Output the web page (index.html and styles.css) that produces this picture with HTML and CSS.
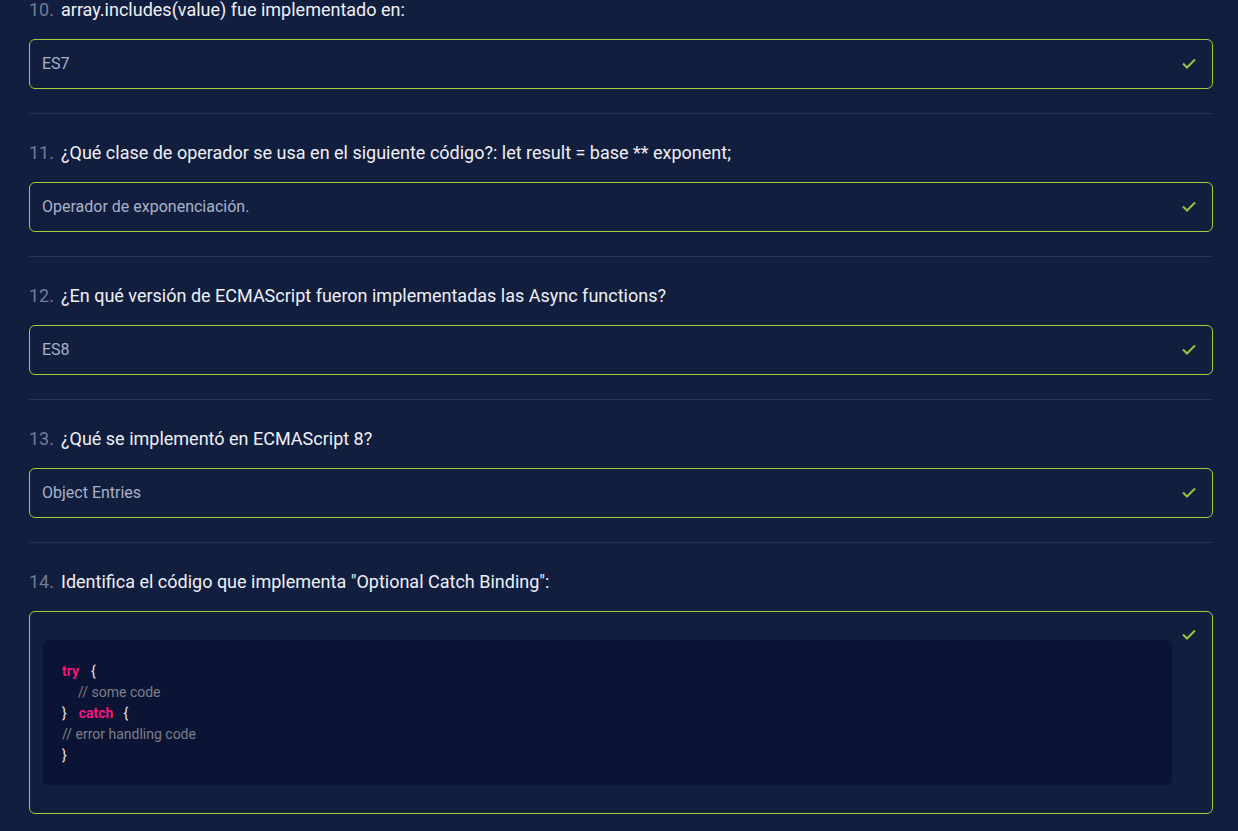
FILE: index.html
```html
<!DOCTYPE html>
<html lang="es">
<head>
<meta charset="utf-8">
<title>Quiz</title>
<link rel="stylesheet" href="styles.css">
</head>
<body>
<main class="quiz">
  <section class="question">
    <h3 class="q-title"><span class="q-num">10.</span>array.includes(value) fue implementado en:</h3>
    <div class="answer">
      <span class="answer-text">ES7</span>
      <svg class="check" width="14" height="11" viewBox="0 0 14 11"><path d="M1 5.5 L5 9.5 L13 1.5" fill="none" stroke="#93c83e" stroke-width="2"/></svg>
    </div>
  </section>
  <section class="question">
    <h3 class="q-title"><span class="q-num">11.</span>¿Qué clase de operador se usa en el siguiente código?: let result = base ** exponent;</h3>
    <div class="answer">
      <span class="answer-text">Operador de exponenciación.</span>
      <svg class="check" width="14" height="11" viewBox="0 0 14 11"><path d="M1 5.5 L5 9.5 L13 1.5" fill="none" stroke="#93c83e" stroke-width="2"/></svg>
    </div>
  </section>
  <section class="question">
    <h3 class="q-title"><span class="q-num">12.</span>¿En qué versión de ECMAScript fueron implementadas las Async functions?</h3>
    <div class="answer">
      <span class="answer-text">ES8</span>
      <svg class="check" width="14" height="11" viewBox="0 0 14 11"><path d="M1 5.5 L5 9.5 L13 1.5" fill="none" stroke="#93c83e" stroke-width="2"/></svg>
    </div>
  </section>
  <section class="question">
    <h3 class="q-title"><span class="q-num">13.</span>¿Qué se implementó en ECMAScript 8?</h3>
    <div class="answer">
      <span class="answer-text">Object Entries</span>
      <svg class="check" width="14" height="11" viewBox="0 0 14 11"><path d="M1 5.5 L5 9.5 L13 1.5" fill="none" stroke="#93c83e" stroke-width="2"/></svg>
    </div>
  </section>
  <section class="question last">
    <h3 class="q-title"><span class="q-num">14.</span>Identifica el código que implementa "Optional Catch Binding":</h3>
    <div class="answer answer-code">
      <pre class="code"><span class="kw kw-first">try</span><span class="p">{</span>
<span class="indent">// some code</span>
<span class="p">}</span><span class="kw kw-mid">catch</span><span class="p">{</span>
<span class="cm">// error handling code</span>
<span class="p">}</span></pre>
      <svg class="check" width="14" height="11" viewBox="0 0 14 11"><path d="M1 5.5 L5 9.5 L13 1.5" fill="none" stroke="#93c83e" stroke-width="2"/></svg>
    </div>
  </section>
</main>
</body>
</html>
```
FILE: styles.css
```css
html, body {
  margin: 0;
  padding: 0;
  background: #121e3e;
}
body {
  font-family: Roboto, "Liberation Sans", Arial, sans-serif;
  color: #eef0f5;
}
.quiz {
  width: 1184px;
  margin: -2px 0 0 29px;
}
.question {
  padding-bottom: 24px;
  border-bottom: 1px solid #263358;
  margin-bottom: 27px;
}
.question.last {
  border-bottom: none;
  margin-bottom: 0;
}
.q-title {
  margin: 0 0 17px 0;
  font-size: 18px;
  line-height: 24px;
  font-weight: 400;
  color: #eef0f5;
}
.q-num {
  color: #6f7d9b;
  font-size: 18px;
  margin-right: 7px;
}
.answer {
  box-sizing: border-box;
  height: 50px;
  border: 1px solid #a2cf3c;
  border-radius: 6px;
  display: flex;
  align-items: center;
  justify-content: space-between;
  padding: 0 16px 2px 12px;
}
.answer-text {
  font-size: 16px;
  color: #a8b2c8;
}
.check {
  flex: none;
}
.answer-code {
  height: auto;
  align-items: flex-start;
  padding: 17px 16px 17px 13px;
}
.code {
  flex: 1;
  margin: 11px 10px 11px 0;
  padding: 21px 19px 19px 19px;
  background: #0b1434;
  border-radius: 6px;
  font-family: Roboto, "Liberation Sans", Arial, sans-serif;
  font-size: 14px;
  line-height: 21px;
  color: #7d7f88;
  white-space: pre;
}
.kw {
  color: #f4157a;
  font-weight: 700;
}
.kw-first {
  margin-right: 12px;
}
.kw-mid {
  margin: 0 10px 0 12px;
}
.p {
  color: #e6e8ee;
}
.indent {
  padding-left: 16px;
}
.cm {
  color: #7d7f88;
}
```
